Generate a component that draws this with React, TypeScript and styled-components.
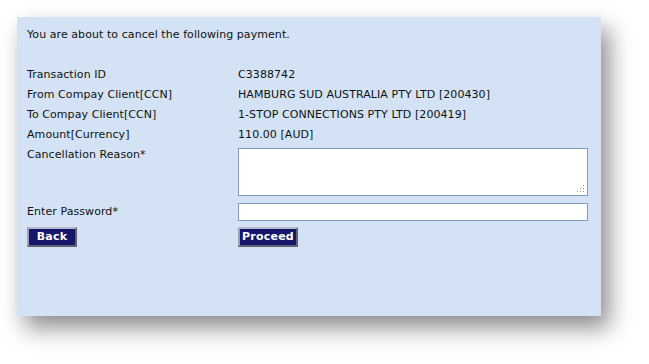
import React from "react";
import styled, { createGlobalStyle } from "styled-components";

const Global = createGlobalStyle`
  html, body { margin: 0; padding: 0; background: #ffffff; }
  body { font-family: "DejaVu Sans", Verdana, sans-serif; }
`;

const Page = styled.div`
  box-sizing: border-box;
  min-height: 364px;
  padding: 17px 0 48px 17px;
`;

const Panel = styled.div`
  box-sizing: border-box;
  width: 584px;
  height: 299px;
  background: #d3e3f5;
  padding: 8px 0 0 10px;
  box-shadow: 8px 12px 22px rgba(0, 0, 0, 0.45);
  font-size: 11px;
  letter-spacing: 0.07px;
  color: #111111;
`;

const Intro = styled.div`
  line-height: 20px;
  margin-bottom: 20px;
`;

const Form = styled.div`
  display: grid;
  grid-template-columns: 211px 350px;
`;

const Cell = styled.div`
  line-height: 20px;
  height: 20px;
  white-space: nowrap;
`;

const TopCell = styled.div<{ $pad?: number }>`
  line-height: 20px;
  white-space: nowrap;
  padding-top: ${(p) => p.$pad ?? 0}px;
`;

const AreaWrap = styled.div`
  position: relative;
  margin-top: 3px;
  height: 48px;
`;

const TextArea = styled.textarea`
  box-sizing: border-box;
  display: block;
  width: 350px;
  height: 48px;
  border: 1px solid #7f9db9;
  background: #ffffff;
  resize: none;
  margin: 0;
  padding: 2px;
  font-family: inherit;
  font-size: 11px;
  outline: none;
`;

const Grip = styled.svg`
  position: absolute;
  right: 3px;
  bottom: 3px;
`;

const Input = styled.input`
  box-sizing: border-box;
  display: block;
  width: 350px;
  height: 18px;
  margin: 1px 0 0 0;
  border: 1px solid #7f9db9;
  background: #ffffff;
  padding: 0 2px;
  font-family: inherit;
  font-size: 11px;
  outline: none;
`;

const ButtonCell = styled.div`
  padding-top: 5px;
`;

const Button = styled.button<{ $w: number }>`
  box-sizing: border-box;
  width: ${(p) => p.$w}px;
  height: 20px;
  margin: 0;
  padding: 0;
  background: #16166a;
  color: #ffffff;
  font-family: "DejaVu Sans", Verdana, sans-serif;
  font-weight: bold;
  font-size: 11px;
  letter-spacing: 0.2px;
  line-height: 16px;
  border-style: solid;
  border-width: 2px;
  border-color: #b4bccb #5f6270 #5f6270 #9aa2b4;
  cursor: pointer;
`;

const rows: [string, string][] = [
  ["Transaction ID", "C3388742"],
  ["From Compay Client[CCN]", "HAMBURG SUD AUSTRALIA PTY LTD [200430]"],
  ["To Compay Client[CCN]", "1-STOP CONNECTIONS PTY LTD [200419]"],
  ["Amount[Currency]", "110.00 [AUD]"],
];

export default function App() {
  return (
    <>
      <Global />
      <Page>
        <Panel>
          <Intro>You are about to cancel the following payment.</Intro>
          <Form>
            {rows.map(([l, v]) => (
              <React.Fragment key={l}>
                <Cell>{l}</Cell>
                <Cell>{v}</Cell>
              </React.Fragment>
            ))}
            <TopCell>Cancellation Reason*</TopCell>
            <AreaWrap>
              <TextArea />
              <Grip width="8" height="8" viewBox="0 0 8 8">
                <g fill="#9a9a9a">
                  <rect x="6" y="0" width="1" height="1" />
                  <rect x="3" y="3" width="1" height="1" />
                  <rect x="6" y="3" width="1" height="1" />
                  <rect x="0" y="6" width="1" height="1" />
                  <rect x="3" y="6" width="1" height="1" />
                  <rect x="6" y="6" width="1" height="1" />
                </g>
              </Grip>
            </AreaWrap>
            <TopCell $pad={6}>Enter Password*</TopCell>
            <TopCell $pad={6}>
              <Input type="password" />
            </TopCell>
            <ButtonCell>
              <Button $w={50}>Back</Button>
            </ButtonCell>
            <ButtonCell>
              <Button $w={60}>Proceed</Button>
            </ButtonCell>
          </Form>
        </Panel>
      </Page>
    </>
  );
}
